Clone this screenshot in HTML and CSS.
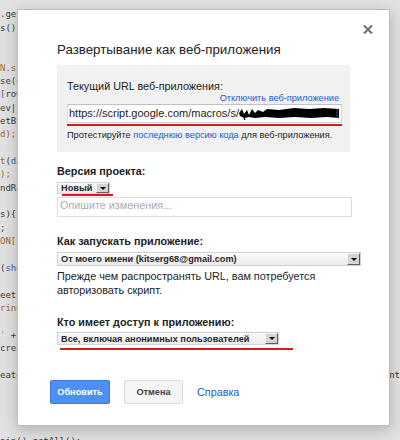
FILE: index.html
```html
<!DOCTYPE html>
<html lang="ru">
<head>
<meta charset="utf-8">
<title>Развертывание как веб-приложения</title>
<link rel="stylesheet" href="styles.css">
</head>
<body>
<div class="code">
<div class="ln">.getValues();</div>
<div class="ln">s();</div>
<div class="ln"></div>
<div class="ln"></div>
<div class="ln"><span class="o">N.stringify(row);</span></div>
<div class="ln">se(data);</div>
<div class="ln"><span class="p">[</span>row];</div>
<div class="ln">ev||{};</div>
<div class="ln">etById(id);</div>
<div class="ln"><span class="o">d);</span></div>
<div class="ln"></div>
<div class="ln"><span class="o">t</span>(<span class="b">d</span>ata);</div>
<div class="ln"><span class="o">);</span></div>
<div class="ln">ndRow(values);</div>
<div class="ln"></div>
<div class="ln">s){</div>
<div class="ln">;</div>
<div class="ln"><span class="o">ON[</span>key];</div>
<div class="ln"></div>
<div class="ln">(<span class="b">sheet</span>);</div>
<div class="ln"></div>
<div class="ln">eet'];</div>
<div class="ln"><span class="o">ring</span>(name);</div>
<div class="ln"></div>
<div class="ln"><span class="g">'</span> + id;</div>
<div class="ln">createOutput();</div>
<div class="ln"></div>
<div class="ln ln-split"><span>eateTextOutput()</span><span>nt</span></div>
<div class="ln"></div>
<div class="ln"></div>
<div class="ln"></div>
<div class="ln"></div>
<div class="ln">ain().getAll();</div>
</div>

<div class="dlg">
  <span class="close" aria-label="Закрыть">
    <svg width="10" height="9" viewBox="0 0 10 9"><path d="M1 0.5 L9 8.5 M9 0.5 L1 8.5" stroke="#6f6f6f" stroke-width="2" fill="none"/></svg>
  </span>
  <h1 class="title">Развертывание как веб-приложения</h1>

  <div class="urlbox">
    <div class="urllabel">Текущий URL веб-приложения:</div>
    <div class="disable"><a class="link">Отключить веб-приложение</a></div>
    <div class="urlinput">https://script.google.com/macros/s/<svg class="scribble" width="100" height="14" viewBox="0 0 100 14"><path d="M0 7 L3 3 L5 8 L8 4 L10 9 L13 3 L16 7 L19 4 L24 6 L28 3 L40 4 L55 2 L70 3 L85 2 L100 3 L100 12 L88 11 L72 12 L56 11 L40 12 L26 11 L16 12 L10 11 L5 12 L1 10 Z" fill="#000"/><path d="M4 9 L6 14" stroke="#000" stroke-width="1.2"/><path d="M98 3 L98 12" stroke="#5a3c8a" stroke-width="1"/></svg></div>
    <div class="redline redline-url"></div>
    <div class="hint">Протестируйте <a class="link">последнюю версию кода</a> для веб-приложения.</div>
  </div>

  <div class="label label-version">Версия проекта:</div>
  <div class="sel sel-version"><span class="sel-text">Новый</span><span class="sel-arrow"></span></div>
  <div class="redline redline-version"></div>
  <div class="textarea">Опишите изменения...</div>

  <div class="label label-run">Как запускать приложение:</div>
  <div class="sel sel-run"><span class="sel-text">От моего имени (kitserg68@gmail.com)</span><span class="sel-arrow"></span></div>
  <p class="para">Прежде чем распространять URL, вам потребуется авторизовать скрипт.</p>

  <div class="label label-access">Кто имеет доступ к приложению:</div>
  <div class="sel sel-access"><span class="sel-text">Все, включая анонимных пользователей</span><span class="sel-arrow"></span></div>
  <div class="redline redline-access"></div>

  <div class="actions">
    <span class="btn btn-primary">Обновить</span>
    <span class="btn btn-secondary">Отмена</span>
    <a class="link help">Справка</a>
  </div>
</div>
</body>
</html>
```

FILE: styles.css
```css
* { box-sizing: border-box; }
html, body { margin: 0; padding: 0; }
body {
  width: 400px;
  height: 440px;
  overflow: hidden;
  position: relative;
  background: #e1e1e1;
  font-family: "Liberation Sans", Arial, sans-serif;
  color: #222;
}

/* background code editor */
.code {
  height: 440px;
  overflow: hidden;
  font-family: "DejaVu Sans Mono", monospace;
  font-size: 9px;
  line-height: 13.35px;
  padding-top: 8.3px;
  color: #3c3c3c;
}
.ln { height: 13.35px; white-space: pre; }
.ln-split { display: flex; justify-content: space-between; }
.o { color: #a8652c; }
.b { color: #3a5fae; }
.p { color: #7b4fa6; }
.g { color: #9a9a9a; }

/* dialog */
.dlg {
  position: absolute;
  left: 17px;
  top: 9px;
  width: 373px;
  height: 417px;
  background: #fff;
  border: 1px solid #bdbdbd;
  box-shadow: 0 4px 14px rgba(0, 0, 0, 0.22);
  padding: 32px 0 0 39px;
}
.close {
  position: absolute;
  top: 15px;
  right: 16px;
  width: 10px;
  height: 9px;
  display: block;
}
.close svg { display: block; }

.title {
  margin: 0 0 7px;
  font-size: 13.3px;
  font-weight: normal;
  line-height: 16px;
  color: #222;
}

.link { color: #1a5ccc; text-decoration: none; }

.urlbox {
  width: 293px;
  background: #f1f1f1;
  padding: 15px 8px 11px 10px;
}
.urllabel { font-size: 10.8px; line-height: 12px; }
.disable {
  text-align: right;
  font-size: 9.2px;
  line-height: 12px;
  padding-right: 3px;
}
.urlinput {
  height: 19px;
  background: #fff;
  border: 1px solid #d9d9d9;
  border-top-color: #c2c2c2;
  font-size: 11px;
  line-height: 17px;
  padding: 0 1px 0 1px;
  white-space: nowrap;
  overflow: hidden;
  color: #222;
}
.scribble { vertical-align: -3px; }

.redline { height: 2px; background: #e5141b; }
.redline-url { margin-top: 1px; }

.hint {
  margin-top: 3px;
  font-size: 9.2px;
  line-height: 12px;
}

.label {
  font-weight: bold;
  font-size: 10.8px;
  line-height: 13px;
  color: #222;
}
.label-version { margin-top: 12.5px; }
.label-run { margin-top: 17.5px; }
.label-access { margin-top: 18.5px; }

.sel {
  display: flex;
  align-items: stretch;
  border: 1px solid #d2d2d2;
  background: linear-gradient(#fbfbfb, #ebebeb);
  font-weight: bold;
  font-size: 9.2px;
  line-height: 10px;
  color: #2a2a2a;
}
.sel-text {
  flex: 1;
  padding-left: 3px;
  white-space: nowrap;
  overflow: hidden;
  display: flex;
  align-items: center;
}
.sel-arrow {
  width: 13px;
  background: #d3d3d3;
  border: 1px solid;
  border-color: #f4f4f4 #5e5e5e #5e5e5e #f4f4f4;
  display: flex;
  align-items: center;
  justify-content: center;
}
.sel-arrow::after {
  content: "";
  border-left: 3px solid transparent;
  border-right: 3px solid transparent;
  border-top: 3px solid #111;
}
.sel-version { width: 53px; height: 12px; margin-top: 4.5px; }
.sel-run { width: 304px; height: 14px; margin-top: 4.5px; }
.sel-access { width: 222px; height: 13px; margin-top: 3.5px; }

.redline-version { width: 51px; margin-left: 5px; }
.redline-access { width: 233px; margin-left: 3px; margin-top: 2.5px; }

.textarea {
  width: 295px;
  height: 20px;
  margin-top: 1px;
  border: 1px solid #dedede;
  font-size: 10.8px;
  line-height: 15px;
  padding: 0 2px;
  color: #ababab;
}

.para {
  margin: 4px 0 0;
  width: 290px;
  font-size: 10.8px;
  line-height: 13.5px;
  color: #222;
}

.actions {
  margin-top: 30.5px;
  margin-left: -7px;
  display: flex;
  align-items: center;
}
.btn {
  height: 24px;
  border-radius: 2px;
  font-weight: bold;
  font-size: 9.2px;
  display: flex;
  align-items: center;
  justify-content: center;
}
.btn-primary {
  width: 60px;
  background: #4d8ff5;
  border: 1px solid #3b7be9;
  color: #fff;
}
.btn-secondary {
  width: 59px;
  margin-left: 14px;
  background: #f5f5f5;
  border: 1px solid #dcdcdc;
  color: #444;
}
.help {
  margin-left: 14px;
  font-size: 10.8px;
}
```
